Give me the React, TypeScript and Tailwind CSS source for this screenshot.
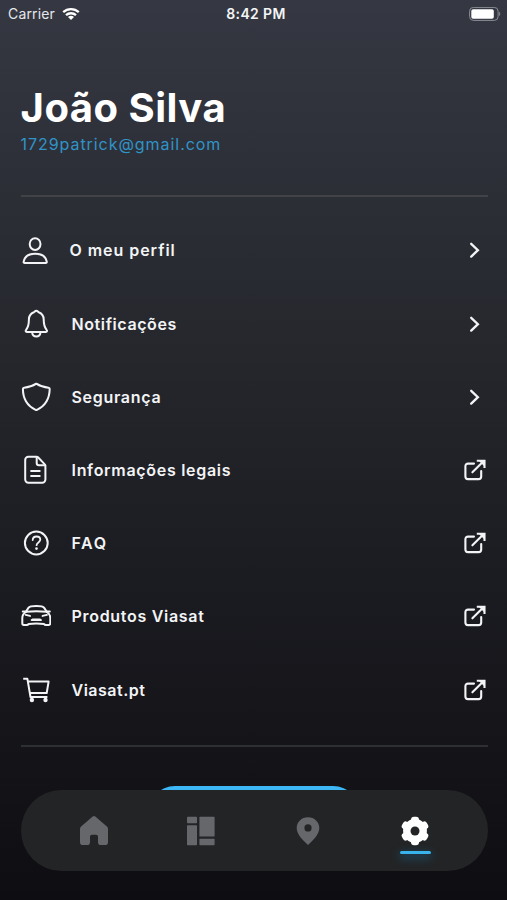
import type { ReactNode } from 'react';

type MenuItem = {
  label: string;
  icon: ReactNode;
  external?: boolean;
  labelClass: string;
};

/** Line icon drawn on a 30px grid */
function LineIcon({ children }: { children: ReactNode }) {
  return (
    <svg
      viewBox="0 0 30 30"
      className="h-[30px] w-[30px] shrink-0 text-gray-100"
      fill="none"
      stroke="currentColor"
      strokeWidth={2}
      strokeLinecap="round"
      strokeLinejoin="round"
      aria-hidden="true"
    >
      {children}
    </svg>
  );
}

const UserIcon = (
  <LineIcon>
    <ellipse cx="14.1" cy="9.1" rx="5.4" ry="5.9" />
    <path d="M3.6 28c-.7 0-1.1-.5-1-1.1.9-5.2 5.4-8.2 11.6-8.2s10.7 3 11.6 8.2c.1.6-.3 1.1-1 1.1Z" />
  </LineIcon>
);

const BellIcon = (
  <LineIcon>
    <path d="M15.3 1.7c-1.2 0-1.5 1.1-2.4 1.5-3.1 1.2-5 4-5 7.2 0 5.1-.7 7.7-2.8 10.5-.8 1-.5 2.1.7 2.1h19.1c1.2 0 1.5-1.1.7-2.1-2.1-2.8-2.9-5.4-2.9-10.5 0-3.2-1.9-6-5-7.2-.9-.4-1.2-1.5-2.400-1.500Z" />
    <path d="M11.1 23.3c.3 2.6 2 4.1 4.2 4.1s3.900-1.500 4.200-4.100" />
  </LineIcon>
);

const ShieldIcon = (
  <LineIcon>
    <path d="M15.3 1.7c-3.5 2.3-8 3.700-12.200 4-.8.1-1.200.6-1.200 1.300.1 9.900 4 16.700 12.700 20.800.5.200.9.200 1.400 0 8.600-4.100 12.500-10.900 12.700-20.800 0-.7-.4-1.200-1.200-1.300-4.300-.3-8.700-1.700-12.200-4Z" />
  </LineIcon>
);

const DocumentIcon = (
  <LineIcon>
    <path d="M15.5 1.7H7.4a3.2 3.2 0 0 0-3.2 3.2v19.6a3.2 3.2 0 0 0 3.2 3.2h13.8a3.2 3.2 0 0 0 3.2-3.2V10.8a2 2 0 0 0-.6-1.4L17 2.3a2 2 0 0 0-1.5-.6Z" />
    <path d="M15.7 2v6a2.3 2.3 0 0 0 2.3 2.3h6.2M10.1 16h8.6M10.1 21h8.6" />
  </LineIcon>
);

const HelpIcon = (
  <LineIcon>
    <circle cx="15.3" cy="15" r="11.4" />
    <path
      d="M11.7 12c.1-2.3 1.6-3.5 3.8-3.5 2.3 0 3.8 1.2 3.8 3.1 0 2.900-3.700 2.700-3.700 5.600"
      strokeWidth={1.8}
    />
    <circle cx="15.5" cy="20.6" r="1.3" fill="currentColor" stroke="none" />
  </LineIcon>
);

const CarIcon = (
  <LineIcon>
    <path d="m4.7 11 2.7-4.1C8.4 5.500 10.300 5 15.300 5s6.900.5 7.900 1.900l2.700 4.100" />
    <path d="M1.8 10.4h2.5M26.3 10.4h2.5" />
    <path d="M5 10.8C2.500 12.300 1.300 14 1.300 17v5.300c0 1.100.5 1.700 1.500 1.700h3c.9 0 1.400-.4 1.900-1.100 4.900-.6 10.300-.6 15.200 0 .5.700 1 1.100 1.900 1.100h3c1 0 1.500-.6 1.500-1.700V17c0-3-1.200-4.700-3.700-6.200-6.500-.8-14.100-.8-20.600 0Z" />
    <path d="m4.7 13.9 4.3 1M25.9 13.9l-4.3 1" />
    <path d="M11.5 18.3h7.6l1.1.8h-9.8Z" fill="currentColor" strokeWidth={1.6} />
  </LineIcon>
);

const CartIcon = (
  <LineIcon>
    <path
      d="M2.2 3.8h4.2L9.500 22h16.900M6.900 6.600h20.700L25.700 18H8.900"
      strokeLinecap="butt"
    />
    <circle cx="10.9" cy="25" r="2.2" fill="currentColor" stroke="none" />
    <circle cx="24.5" cy="25" r="2.2" fill="currentColor" stroke="none" />
  </LineIcon>
);

const menuItems: MenuItem[] = [
  { label: 'O meu perfil', icon: UserIcon, labelClass: 'ml-[19px] tracking-[0.95px]' },
  { label: 'Notificações', icon: BellIcon, labelClass: 'ml-[21px] tracking-[0.6px]' },
  { label: 'Segurança', icon: ShieldIcon, labelClass: 'ml-[21px] tracking-[0.7px]' },
  { label: 'Informações legais', icon: DocumentIcon, external: true, labelClass: 'ml-[21px] tracking-[0.7px]' },
  { label: 'FAQ', icon: HelpIcon, external: true, labelClass: 'ml-[21px] tracking-[1.6px]' },
  { label: 'Produtos Viasat', icon: CarIcon, external: true, labelClass: 'ml-[21px] tracking-[0.7px]' },
  { label: 'Viasat.pt', icon: CartIcon, external: true, labelClass: 'ml-[21px] tracking-[0.5px]' },
];

function RowAction({ external }: { external?: boolean }) {
  return (
    <svg
      viewBox="0 0 26 26"
      className="ml-auto h-[26px] w-[26px] shrink-0 text-gray-100"
      fill="none"
      stroke="currentColor"
      strokeWidth={2.1}
      strokeLinecap="round"
      strokeLinejoin="round"
      aria-hidden="true"
    >
      {external ? (
        <>
          <path d="M12 6.600H6a2.600 2.600 0 0 0-2.600 2.600v10.300a2.600 2.600 0 0 0 2.600 2.600h10.600a2.600 2.600 0 0 0 2.600-2.600V14" />
          <path d="M10.4 15.3 21 4.700" />
          <path d="M14.8 3.7h7.7V11" strokeLinecap="butt" strokeLinejoin="miter" />
          <path d="M17 4h5.200v5.200Z" fill="currentColor" stroke="none" />
        </>
      ) : (
        <path d="m9.200 6.800 6.700 6.400-6.700 6.400" strokeWidth={2.3} strokeLinejoin="miter" />
      )}
    </svg>
  );
}

function StatusBar() {
  return (
    <div className="grid h-7 grid-cols-3 items-center pr-[6px] pl-2 text-sm text-gray-200">
      <div className="flex items-center gap-[7px]">
        <span className="tracking-[0.15px]">Carrier</span>
        <svg viewBox="0 0 18 14" className="-mt-px h-[14px] w-[18px] text-white" fill="none" stroke="currentColor" strokeWidth={2.3} aria-hidden="true">
          <path d="M1.200 5.200a11.500 11.500 0 0 1 15.600 0M4 8.200a7.400 7.400 0 0 1 10 0" />
          <path d="M9 13 6 10.100a4.400 4.400 0 0 1 6 0Z" fill="currentColor" stroke="none" />
        </svg>
      </div>
      <span className="pl-[3px] text-center font-semibold tracking-[0.35px] text-gray-100">8:42 PM</span>
      <svg viewBox="0 0 32 14" className="-mt-px h-[14px] w-8 justify-self-end" aria-hidden="true">
        <rect x=".6" y=".4" width="28.5" height="13" rx="3.8" fill="none" stroke="#8b8e94" />
        <rect x="2.3" y="2.2" width="22.5" height="9.6" rx="1.8" fill="#fff" />
        <path d="M30.200 4.800c1.400.7 1.400 3.600 0 4.300Z" fill="#8b8e94" />
      </svg>
    </div>
  );
}

function TabBar() {
  return (
    <nav className="absolute top-[790px] right-[19px] left-[21px] grid h-[81px] grid-cols-4 items-center rounded-full bg-[#232425] px-[19px] text-[#66676b]">
      <a href="#home" aria-label="Início" className="flex justify-center">
        <svg viewBox="0 0 30 30" className="h-[30px] w-[30px]" fill="currentColor" aria-hidden="true">
          <path d="M13.700.6a2 2 0 0 1 2.600 0L27.900 10.600c.7.600 1.100 1.500 1.100 2.400v13.200a2.800 2.800 0 0 1-2.800 2.800h-4.400a2.800 2.800 0 0 1-2.800-2.800v-5.500a1.900 1.900 0 0 0-1.900-1.900h-4.200a1.900 1.900 0 0 0-1.900 1.900v5.500A2.800 2.800 0 0 1 8.200 29H3.800A2.800 2.800 0 0 1 1 26.200V13c0-.9.4-1.800 1.100-2.400Z" />
        </svg>
      </a>
      <a href="#dashboard" aria-label="Painel" className="flex justify-center">
        <svg viewBox="0 0 30 30" className="h-[30px] w-[30px]" fill="currentColor" aria-hidden="true">
          <rect x="1" y=".8" width="10" height="6.5" rx=".7" />
          <rect x="1" y="9.2" width="10" height="20" rx=".7" />
          <rect x="13.4" y=".8" width="15.2" height="19.8" rx=".7" />
          <rect x="13.4" y="22.8" width="15.2" height="6.4" rx=".7" />
        </svg>
      </a>
      <a href="#map" aria-label="Mapa" className="flex justify-center">
        <svg viewBox="0 0 30 30" className="h-[30px] w-[30px]" fill="currentColor" fillRule="evenodd" aria-hidden="true">
          <path d="M15 1.300c6.400 0 11.300 4.800 11.300 10.600 0 6.400-5.800 11.700-11.300 17-5.500-5.300-11.300-10.600-11.300-17C3.700 6.100 8.600 1.300 15 1.300Zm0 7a3.600 3.600 0 1 0 0 7.200 3.600 3.600 0 0 0 0-7.200Z" />
        </svg>
      </a>
      <a href="#settings" aria-label="Definições" className="relative flex justify-center text-white">
        <svg viewBox="0 0 30 30" className="h-[30px] w-[30px]" fill="currentColor" aria-hidden="true">
          <circle cx="15" cy="15" r="11.9" />
          <rect x="11" y=".7" width="8" height="28.6" rx="3" />
          <rect x="11" y=".7" width="8" height="28.6" rx="3" transform="rotate(60 15 15)" />
          <rect x="11" y=".7" width="8" height="28.6" rx="3" transform="rotate(120 15 15)" />
          <circle cx="15" cy="15" r="4.5" fill="#232425" />
        </svg>
        {/* glowing marker under the active tab */}
        <span className="absolute top-[35px] h-[3px] w-[31px] rounded-xs bg-[#38b3eb] shadow-[0_3px_10px_1px_rgba(20,135,200,0.45)]" />
      </a>
    </nav>
  );
}

export default function App() {
  return (
    <main className="relative h-[900px] w-full overflow-hidden bg-linear-to-b from-[#353842] via-[#222429] via-[46%] to-[#0e0d12] font-['Inter','Noto_Sans',sans-serif] text-white">
      <StatusBar />

      <div className="flex flex-col pr-[19px] pl-[20.5px]">
        <header className="h-[167px] pt-[56px]">
          <h1 className="text-[40px] leading-[48px] font-bold tracking-[0.5px] whitespace-nowrap">João Silva</h1>
          <p className="text-base leading-6 tracking-[0.95px] text-[#3094c8]">1729patrick@gmail.com</p>
        </header>

        <div className="h-[2px] bg-[#414348]" />

        <ul className="mt-[16.8px] flex flex-col">
          {menuItems.map((item) => (
            <li key={item.label} className="flex h-[73.2px] items-center">
              {item.icon}
              <span className={`text-base leading-6 font-semibold whitespace-nowrap text-gray-100 ${item.labelClass}`}>
                {item.label}
              </span>
              <RowAction external={item.external} />
            </li>
          ))}
        </ul>

        <div className="mt-[18.8px] h-[2px] bg-[#2e2f32]" />

        <button type="button" aria-label="Terminar sessão" className="mt-[39px] h-14 w-[214px] self-center rounded-full bg-[#3db7f5]" />
      </div>

      <TabBar />
    </main>
  );
}
